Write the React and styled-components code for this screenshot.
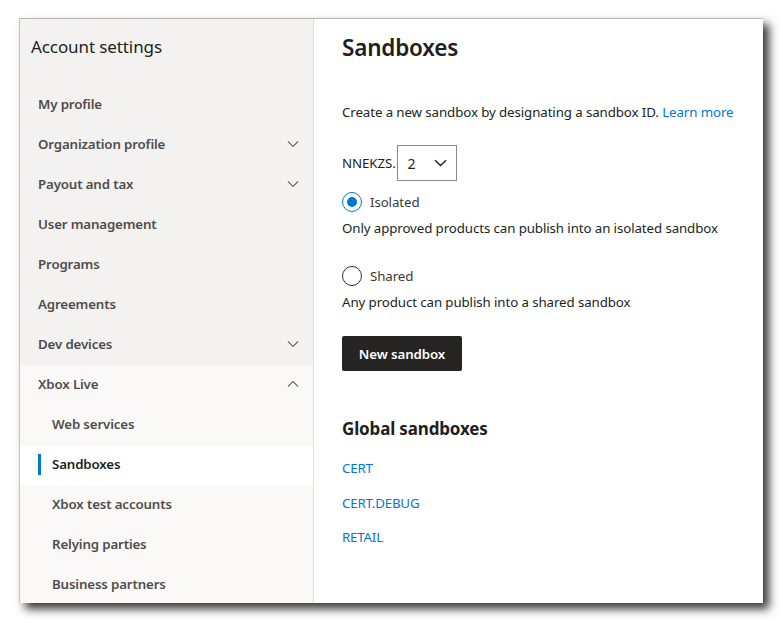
import React from "react";
import styled, { createGlobalStyle } from "styled-components";

const Global = createGlobalStyle`
  html, body { margin: 0; padding: 0; background: #ffffff; }
  body { font-family: "Noto Sans", "Open Sans", sans-serif; }
  * { box-sizing: border-box; }
`;

const Page = styled.div`
  width: 783px;
  height: 623px;
  padding: 18px 0 0 19px;
  background: #ffffff;
  overflow: hidden;
`;

const Frame = styled.div`
  width: 744px;
  height: 585px;
  display: flex;
  border-top: 1px solid #b9b9b9;
  border-left: 1px solid #c4c4c4;
  background: #ffffff;
  box-shadow: 6px 6px 9px rgba(0, 0, 0, 0.78);
  overflow: hidden;
`;

const Sidebar = styled.nav`
  width: 294px;
  flex: none;
  display: flex;
  flex-direction: column;
  background: #f3f2f1;
  border-right: 1px solid #e1dfdd;
`;

const SideTitle = styled.div`
  height: 67px;
  flex: none;
  padding: 16px 0 0 11px;
  font-size: 17px;
  color: #201f1e;
  letter-spacing: -0.1px;
`;

const Group = styled.div`
  display: flex;
  flex-direction: column;
  flex: none;
  background: ${(p) => (p.$open ? "#faf9f8" : "transparent")};
`;

const NavRow = styled.div`
  position: relative;
  height: 40px;
  flex: none;
  display: flex;
  align-items: center;
  justify-content: space-between;
  padding: 0 14px 0 ${(p) => (p.$sub ? "32px" : "18px")};
  padding-bottom: 5px;
  font-size: 13.3px;
  font-weight: 600;
  color: ${(p) => (p.$active ? "#201f1e" : "#4f4d4b")};
  background: ${(p) => (p.$active ? "#ffffff" : "transparent")};
  letter-spacing: -0.15px;
`;

const ActiveBar = styled.span`
  position: absolute;
  left: 18px;
  top: 8px;
  width: 3px;
  height: 21px;
  background: #0078d4;
`;

const Chevron = ({ up }) => (
  <svg width="12" height="8" viewBox="0 0 12 8" fill="none">
    <path
      d={up ? "M1 6.5 L6 1.5 L11 6.5" : "M1 1.5 L6 6.5 L11 1.5"}
      stroke="#6b6967"
      strokeWidth="1.1"
    />
  </svg>
);

const Main = styled.main`
  flex: 1;
  padding: 14px 0 0 28px;
  display: flex;
  flex-direction: column;
  color: #201f1e;
`;

const Heading = styled.h1`
  margin: 0;
  font-size: 22.5px;
  font-weight: 600;
  line-height: 30px;
  letter-spacing: -0.2px;
`;

const Text = styled.p`
  margin: ${(p) => p.$m || "0"};
  font-size: 13.3px;
  line-height: 18px;
  letter-spacing: -0.1px;
`;

const Link = styled.a`
  color: #0078d4;
  text-decoration: none;
`;

const IdRow = styled.div`
  margin-top: 24px;
  display: flex;
  align-items: center;
  font-size: 13.3px;
  letter-spacing: -0.1px;
`;

const Select = styled.div`
  width: 60px;
  height: 36px;
  border: 1px solid #8a8886;
  display: flex;
  align-items: center;
  justify-content: space-between;
  padding: 0 9px 0 10px;
  font-size: 14px;
  margin-left: 1px;
`;

const RadioRow = styled.div`
  display: flex;
  align-items: center;
  gap: 8px;
  margin-top: ${(p) => p.$mt || "0"};
  font-size: 13.3px;
  color: #3b3a39;
  letter-spacing: -0.1px;
`;

const RadioCircle = styled.span`
  width: 20px;
  height: 20px;
  border-radius: 50%;
  border: 1px solid ${(p) => (p.$on ? "#0078d4" : "#323130")};
  display: flex;
  align-items: center;
  justify-content: center;
  &::after {
    content: "";
    width: 10px;
    height: 10px;
    border-radius: 50%;
    background: ${(p) => (p.$on ? "#0078d4" : "transparent")};
  }
`;

const Button = styled.button`
  margin-top: 25px;
  width: 120px;
  height: 35px;
  border: none;
  border-radius: 2px;
  background: #252423;
  color: #ffffff;
  font-family: inherit;
  font-size: 13.3px;
  font-weight: 600;
  letter-spacing: -0.1px;
  align-self: flex-start;
  padding: 0;
`;

const SubHeading = styled.h2`
  margin: 46px 0 0;
  font-size: 17px;
  font-weight: 700;
  line-height: 24px;
  letter-spacing: -0.15px;
`;

const LinkList = styled.div`
  margin-top: 18px;
  display: flex;
  flex-direction: column;
  gap: 16.5px;
  font-size: 13.3px;
  line-height: 18px;
  letter-spacing: -0.2px;
`;

const top = [
  { label: "My profile" },
  { label: "Organization profile", chev: true },
  { label: "Payout and tax", chev: true },
  { label: "User management" },
  { label: "Programs" },
  { label: "Agreements" },
  { label: "Dev devices", chev: true },
];

const sub = [
  { label: "Web services" },
  { label: "Sandboxes", active: true },
  { label: "Xbox test accounts" },
  { label: "Relying parties" },
  { label: "Business partners" },
];

export default function App() {
  return (
    <>
      <Global />
      <Page>
        <Frame>
          <Sidebar>
            <SideTitle>Account settings</SideTitle>
            <Group>
              {top.map((it) => (
                <NavRow key={it.label}>
                  <span>{it.label}</span>
                  {it.chev && <Chevron />}
                </NavRow>
              ))}
            </Group>
            <Group $open>
              <NavRow>
                <span>Xbox Live</span>
                <Chevron up />
              </NavRow>
              {sub.map((it) => (
                <NavRow key={it.label} $sub $active={it.active}>
                  {it.active && <ActiveBar />}
                  <span>{it.label}</span>
                </NavRow>
              ))}
            </Group>
          </Sidebar>
          <Main>
            <Heading>Sandboxes</Heading>
            <Text $m="40px 0 0">
              Create a new sandbox by designating a sandbox ID.{" "}
              <Link href="#">Learn more</Link>
            </Text>
            <IdRow>
              <span>NNEKZS.</span>
              <Select>
                <span>2</span>
                <svg width="13" height="8" viewBox="0 0 13 8" fill="none">
                  <path d="M1 1.2 L6.5 6.5 L12 1.2" stroke="#201f1e" strokeWidth="1.4" />
                </svg>
              </Select>
            </IdRow>
            <RadioRow $mt="11px">
              <RadioCircle $on />
              <span>Isolated</span>
            </RadioRow>
            <Text $m="7px 0 0">Only approved products can publish into an isolated sandbox</Text>
            <RadioRow $mt="29px">
              <RadioCircle />
              <span>Shared</span>
            </RadioRow>
            <Text $m="7px 0 0">Any product can publish into a shared sandbox</Text>
            <Button>New sandbox</Button>
            <SubHeading>Global sandboxes</SubHeading>
            <LinkList>
              <Link href="#">CERT</Link>
              <Link href="#">CERT.DEBUG</Link>
              <Link href="#">RETAIL</Link>
            </LinkList>
          </Main>
        </Frame>
      </Page>
    </>
  );
}
